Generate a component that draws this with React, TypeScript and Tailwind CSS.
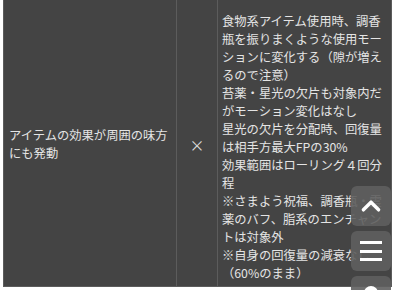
const notes = [
  "食物系アイテム使用時、調香",
  "瓶を振りまくような使用モー",
  "ションに変化する（隙が増え",
  "るので注意）",
  "苔薬・星光の欠片も対象内だ",
  "がモーション変化はなし",
  "星光の欠片を分配時、回復量",
  "は相手方最大FPの30%",
  "効果範囲はローリング４回分",
  "程",
  "※さまよう祝福、調香瓶・霊",
  "薬のバフ、脂系のエンチャン",
  "トは対象外",
  "※自身の回復量の減衰なし",
  "（60%のまま）",
];

function FloatingButtons() {
  return (
    <div className="absolute left-[351px] top-[186px] flex flex-col gap-[5px]">
      <button className="flex h-[40px] w-[40px] items-center justify-center rounded-[6px] bg-[#5f5f5f]/90 text-white">
        <svg viewBox="0 0 24 24" fill="none" stroke="currentColor" strokeWidth="3.2" strokeLinecap="round" strokeLinejoin="round" className="h-[26px] w-[26px]">
          <path d="M5 15.5 12 8.5l7 7" />
        </svg>
      </button>
      <button className="flex h-[40px] w-[40px] flex-col items-center justify-center gap-[5.5px] rounded-[6px] bg-[#5f5f5f]/90">
        <span className="h-[3px] w-[22px] bg-white" />
        <span className="h-[3px] w-[22px] bg-white" />
        <span className="h-[3px] w-[22px] bg-white" />
      </button>
      <button className="flex h-[40px] w-[40px] justify-center rounded-[6px] bg-[#5f5f5f]/90 pt-[10px]">
        <span className="h-[14px] w-[14px] rounded-full bg-white" />
      </button>
    </div>
  );
}

export default function App() {
  return (
    <div
      className="relative h-[290px] w-[400px] overflow-hidden bg-white pl-[3px] text-[12.3px] leading-[18px] text-[#e4e4e4]"
      style={{ fontFamily: '"Noto Sans CJK JP", "Noto Sans", sans-serif' }}
    >
      <div className="flex h-[287px] w-[389px] border border-t-0 border-[#5c5c5c] bg-[#444444]">
        <div className="flex w-[173px] items-center border-r border-[#5c5c5c] pl-[5px] pt-[2px]">
          <p>
            アイテムの効果が周囲の味方
            <br />
            にも発動
          </p>
        </div>
        <div className="flex w-[41px] items-center justify-center border-r border-[#5c5c5c] pt-[4px] text-[15px] text-[#dcdcdc]">
          ×
        </div>
        <div className="flex-1 pl-[4px] pt-[12px]">
          {notes.map((line, i) => (
            <div key={i} className="whitespace-nowrap">
              {line}
            </div>
          ))}
        </div>
      </div>
      <FloatingButtons />
    </div>
  );
}
